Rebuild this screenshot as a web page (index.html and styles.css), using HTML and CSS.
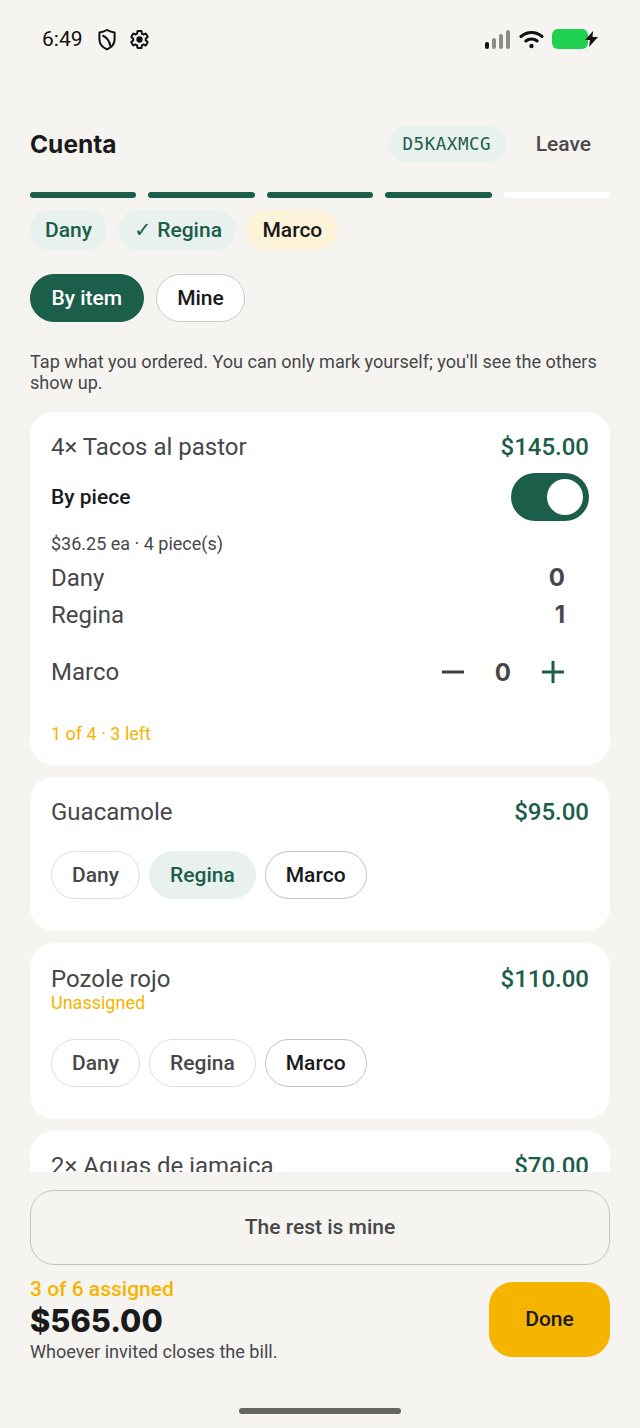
FILE: index.html
```html
<!DOCTYPE html>
<html lang="es">
<head>
<meta charset="UTF-8" />
<title>Cuenta</title>
<link rel="stylesheet" href="styles.css">
</head>
<body>

<div class="status">
  <div class="status-left">
    <span class="time">6:49</span>
    <svg width="20" height="23" viewBox="0 0 20 23" fill="none" stroke="#111" stroke-width="2" stroke-linejoin="round"><path d="M10 2c2.600 1.600 5 2.300 7.600 2.400v7c0 4.400-2.800 7.600-7.600 10-4.800-2.400-7.600-5.600-7.600-10v-7C5 4.300 7.400 3.600 10 2z"/><path d="M5.500 7.500c4 1.500 7.500 6 7.800 11"/></svg>
    <svg class="ico-gear" width="21" height="21" viewBox="0 0 24 24" fill="none" stroke="#111" stroke-width="2.300"><path d="M19.140 12.940c.04-.3.06-.61.06-.94 0-.32-.02-.64-.07-.94l2.030-1.580c.18-.14.23-.41.12-.61l-1.920-3.320c-.12-.22-.37-.29-.59-.22l-2.390.96c-.5-.38-1.030-.7-1.620-.94l-.36-2.540c-.04-.24-.24-.41-.48-.41h-3.840c-.24 0-.43.17-.47.41l-.36 2.540c-.59.24-1.130.57-1.620.94l-2.390-.96c-.22-.08-.47 0-.59.22L2.740 8.870c-.12.21-.08.47.12.61l2.030 1.580c-.05.3-.09.63-.09.94s.02.64.07.94l-2.030 1.580c-.18.14-.23.41-.12.61l1.920 3.320c.12.22.37.29.59.22l2.390-.96c.5.38 1.030.7 1.620.94l.36 2.540c.05.24.24.41.48.41h3.840c.24 0 .44-.17.47-.41l.36-2.540c.59-.24 1.130-.56 1.620-.94l2.390.96c.22.08.47 0 .59-.22l1.920-3.320c.12-.22.07-.47-.12-.61l-2.010-1.580z"/><circle cx="12" cy="12" r="3.600" fill="#111" stroke="none"/></svg>
  </div>
  <div class="status-right">
    <span class="signal"><i></i><i></i><i></i><i></i></span>
    <svg width="25" height="19" viewBox="0 0 25 19" fill="none" stroke="#111" stroke-width="3" stroke-linecap="round"><path d="M2 6.500C8.300 1 16.700 1 23 6.500"/><path d="M6.800 11c3.300-2.800 8.100-2.800 11.400 0"/><circle cx="12.500" cy="16" r="2.200" fill="#111" stroke="none"/></svg>
    <span class="battery"></span>
    <svg class="bolt" width="13" height="16" viewBox="0 0 13 16" fill="#111"><path d="M8 0 0 9h5l-1 7 9-10H7.500z"/></svg>
  </div>
</div>

<div class="scroll">
  <div class="header">
    <h1>Cuenta</h1>
    <span class="code">D5KAXMCG</span>
    <span class="leave">Leave</span>
  </div>

  <div class="steps">
    <span class="step done"></span>
    <span class="step done"></span>
    <span class="step done"></span>
    <span class="step done"></span>
    <span class="step"></span>
  </div>

  <div class="people">
    <span class="person">Dany</span>
    <span class="person">✓ Regina</span>
    <span class="person pending">Marco</span>
  </div>

  <div class="tabs">
    <span class="tab active">By item</span>
    <span class="tab">Mine</span>
  </div>

  <p class="hint">Tap what you ordered. You can only mark yourself; you'll see the others show up.</p>

  <div class="card card-tacos">
    <div class="item-row">
      <span class="item-name">4× Tacos al pastor</span>
      <span class="price">$145.00</span>
    </div>
    <div class="piece-row">
      <span class="piece-label">By piece</span>
      <span class="toggle"><span class="knob"></span></span>
    </div>
    <div class="each">$36.25 ea · 4 piece(s)</div>
    <div class="share-row first"><span>Dany</span><b class="count">0</b></div>
    <div class="share-row"><span>Regina</span><b class="count">1</b></div>
    <div class="share-row mine">
      <span>Marco</span>
      <span class="stepper">
        <svg width="24" height="24" viewBox="0 0 24 24"><rect x="1" y="10.500" width="22" height="3" fill="#3f3f42"/></svg>
        <b class="count">0</b>
        <svg width="24" height="24" viewBox="0 0 24 24"><path d="M12 1v22M1 12h22" stroke="#1b5e4a" stroke-width="3" fill="none"/></svg>
      </span>
    </div>
    <div class="left-note">1 of 4 · 3 left</div>
  </div>

  <div class="card">
    <div class="item-row">
      <span class="item-name">Guacamole</span>
      <span class="price">$95.00</span>
    </div>
    <div class="who">
      <span class="who-btn">Dany</span>
      <span class="who-btn picked">Regina</span>
      <span class="who-btn me">Marco</span>
    </div>
  </div>

  <div class="card card-pozole">
    <div class="item-row">
      <span class="item-name">Pozole rojo</span>
      <span class="price">$110.00</span>
    </div>
    <div class="unassigned">Unassigned</div>
    <div class="who">
      <span class="who-btn">Dany</span>
      <span class="who-btn">Regina</span>
      <span class="who-btn me">Marco</span>
    </div>
  </div>

  <div class="card">
    <div class="item-row">
      <span class="item-name">2× Aguas de jamaica</span>
      <span class="price">$70.00</span>
    </div>
  </div>
</div>

<div class="footer">
  <div class="rest">The rest is mine</div>
  <div class="totals">
    <div>
      <div class="assigned">3 of 6 assigned</div>
      <div class="total">$565.00</div>
      <div class="closes">Whoever invited closes the bill.</div>
    </div>
    <div class="done-btn">Done</div>
  </div>
  <div class="home"></div>
</div>

</body>
</html>
```

FILE: styles.css
```css
* {
  box-sizing: border-box;
}
html, body {
  margin: 0;
  height: 1428px;
  overflow: hidden;
}
body {
  font-family: Roboto, sans-serif;
  background: #f6f4f0;
  color: #47474a;
  display: flex;
  flex-direction: column;
}
.status {
  flex: none;
  height: 78px;
  padding: 0 42px;
  display: flex;
  align-items: center;
  justify-content: space-between;
}
.status-left {
  display: flex;
  align-items: center;
}
.time {
  font-size: 21px;
  color: #111;
  margin-right: 14px;
}
.ico-gear {
  margin-left: 12px;
}
.status-right {
  display: flex;
  align-items: center;
}
.signal {
  display: flex;
  align-items: flex-end;
  gap: 3px;
  height: 19px;
  margin-right: 9px;
}
.signal i {
  width: 4px;
  background: #8b8b88;
  border-radius: 2px;
}
.signal i:nth-child(1) { height: 7px; background: #111; }
.signal i:nth-child(2) { height: 11px; }
.signal i:nth-child(3) { height: 15px; }
.signal i:nth-child(4) { height: 19px; }
.battery {
  width: 36px;
  height: 20px;
  margin-left: 8px;
  background: #1fd14f;
  border-radius: 6px;
}
.bolt {
  margin-left: -3px;
}
.scroll {
  flex: none;
  height: 1094px;
  overflow: hidden;
  padding: 48px 30px 0;
}
.header {
  display: flex;
  align-items: center;
  height: 36px;
}
h1 {
  margin: 0;
  flex: 1;
  font-family: Inter, sans-serif;
  font-size: 24.500px;
  font-weight: 700;
  color: #1a1a1c;
}
.code {
  height: 36px;
  line-height: 36px;
  padding: 0 14.500px;
  border-radius: 18px;
  background: #e8f1ed;
  color: #1b5e4a;
  font-family: "DejaVu Sans Mono", monospace;
  font-size: 17.500px;
  letter-spacing: 0.550px;
}
.leave {
  margin: 0 19px 0 30px;
  font-size: 21px;
  font-weight: 500;
  color: #4a4a4d;
}
.steps {
  display: flex;
  gap: 12px;
  margin-top: 30px;
}
.step {
  flex: 1;
  height: 6px;
  border-radius: 3px;
  background: #fff;
}
.step.done {
  background: #1b5e4a;
}
.people {
  display: flex;
  gap: 12px;
  margin-top: 12px;
}
.person {
  height: 40px;
  line-height: 40px;
  padding: 0 15px;
  border-radius: 20px;
  background: #e8f1ed;
  color: #1b5e4a;
  font-size: 21px;
  font-weight: 500;
}
.person:nth-child(2) {
  padding-right: 14px;
}
.person.pending {
  margin-left: -1px;
  padding: 0 15.500px;
  background: #fdf3d9;
  color: #1a1a1c;
}
.tabs {
  display: flex;
  gap: 12px;
  margin-top: 24px;
}
.tab {
  height: 48px;
  line-height: 46px;
  padding: 0 20.500px;
  border-radius: 24px;
  border: 1.500px solid #cacaca;
  background: #fff;
  color: #1a1a1c;
  font-size: 21px;
  font-weight: 500;
}
.tab.active {
  background: #1b5e4a;
  border-color: #1b5e4a;
  color: #fff;
}
.hint {
  margin: 30px 0 19px;
  font-size: 18.100px;
  line-height: 20.500px;
}
.card {
  background: #fff;
  border-radius: 24px;
  padding: 21px;
  margin-bottom: 12px;
}
.card-tacos {
  height: 353px;
}
.item-row {
  display: flex;
  justify-content: space-between;
  align-items: center;
  height: 28px;
}
.item-name {
  font-size: 24px;
}
.price {
  font-size: 24px;
  font-weight: 500;
  color: #1b5e4a;
}
.piece-row {
  display: flex;
  justify-content: space-between;
  align-items: center;
  margin-top: 12px;
}
.piece-label {
  font-size: 21px;
  font-weight: 500;
  color: #1a1a1c;
}
.toggle {
  width: 78px;
  height: 48px;
  padding: 6px;
  border-radius: 24px;
  background: #1b5e4a;
  display: flex;
  justify-content: flex-end;
}
.knob {
  width: 36px;
  height: 36px;
  border-radius: 50%;
  background: #fff;
}
.each {
  margin-top: 12px;
  font-size: 18px;
}
.share-row {
  display: flex;
  justify-content: space-between;
  align-items: center;
  height: 37px;
  font-size: 24px;
  padding-right: 24px;
}
.share-row.first {
  margin-top: 5px;
}
.share-row.mine {
  height: 48px;
  margin-top: 15px;
}
.count {
  font-family: Inter, sans-serif;
  font-size: 24px;
  font-weight: 700;
}
.stepper {
  display: flex;
  align-items: center;
  gap: 30px;
}
.left-note {
  margin-top: 27px;
  font-size: 18px;
  color: #f5b400;
}
.who {
  display: flex;
  gap: 9px;
  margin-top: 25px;
  padding-bottom: 11px;
}
.who-btn {
  height: 48px;
  line-height: 46px;
  padding: 0 20px;
  border-radius: 24px;
  border: 1.500px solid #dedede;
  font-size: 21px;
  font-weight: 500;
}
.who-btn.picked {
  background: #e8f1ed;
  border-color: #e8f1ed;
  color: #1b5e4a;
}
.who-btn.me {
  border-color: #c4c4c4;
  color: #1a1a1c;
}
.unassigned {
  font-size: 18px;
  color: #f5b400;
}
.card-pozole .item-row {
  margin-top: 1px;
}
.card-pozole .unassigned {
  margin-top: -1px;
}
.card-pozole .who {
  margin-top: 26px;
}
.footer {
  flex: 1;
  background: #f6f4f0;
  padding: 18px 30px 0;
}
.rest {
  height: 75px;
  line-height: 73px;
  text-align: center;
  border: 1.500px solid #c4c4c8;
  border-radius: 24px;
  font-size: 21px;
  font-weight: 500;
}
.totals {
  display: flex;
  justify-content: space-between;
  align-items: center;
  margin-top: 12px;
}
.assigned {
  font-size: 21px;
  font-weight: 500;
  color: #f5b400;
}
.total {
  font-family: Inter, sans-serif;
  font-size: 30.800px;
  font-weight: 800;
  line-height: 40px;
  color: #1a1a1c;
}
.closes {
  font-size: 18.100px;
}
.done-btn {
  width: 121px;
  height: 75px;
  line-height: 75px;
  text-align: center;
  border-radius: 24px;
  background: #f5b400;
  color: #1a1a1c;
  font-size: 21px;
  font-weight: 500;
}
.home {
  width: 162px;
  height: 6px;
  margin: 46px auto 0;
  border-radius: 3px;
  background: #666661;
}
```
